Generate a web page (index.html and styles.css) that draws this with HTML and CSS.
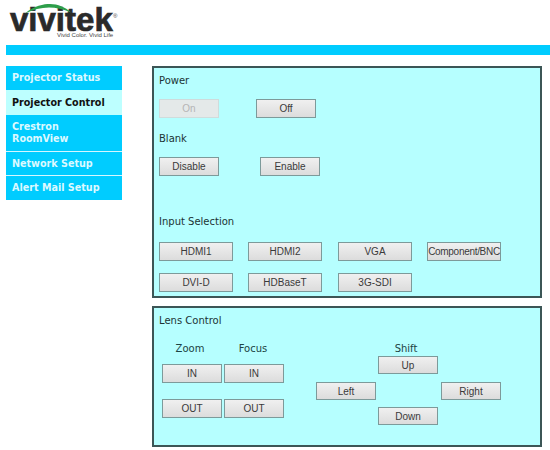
FILE: index.html
```html
<!DOCTYPE html>
<html lang="en">
<head>
<meta charset="utf-8">
<title>Vivitek Projector Control</title>
<link rel="stylesheet" href="styles.css">
</head>
<body>
<header class="header">
  <div class="logo">
    <span class="logo-word">vivitek</span><span class="logo-reg">®</span>
    <svg class="logo-arc" width="46" height="10" viewBox="0 0 46 10"><path d="M0 9.5C9 1.5 19 0 25 0C33 0 40 3 46 8.5C38 5 31 3.4 24 3.4C16 3.4 8 5.5 0 9.5Z" fill="#2e9e4a"/></svg>
    <span class="logo-tag">Vivid Color. Vivid Life</span>
  </div>
</header>
<div class="bar"></div>
<div class="content">
  <nav class="nav">
    <a class="nav-item nav-status">Projector Status</a>
    <a class="nav-item nav-active">Projector Control</a>
    <a class="nav-item nav-tall">Crestron RoomView</a>
    <a class="nav-item nav-net">Network Setup</a>
    <a class="nav-item">Alert Mail Setup</a>
  </nav>
  <main class="main">
    <section class="panel panel-top">
      <div class="label">Power</div>
      <div class="row row-power">
        <button class="btn btn-off" disabled>On</button>
        <button class="btn">Off</button>
      </div>
      <div class="label label-blank">Blank</div>
      <div class="row row-blank">
        <button class="btn">Disable</button>
        <button class="btn">Enable</button>
      </div>
      <div class="label label-input">Input Selection</div>
      <div class="inputs">
        <button class="btn btn-wide">HDMI1</button>
        <button class="btn btn-wide">HDMI2</button>
        <button class="btn btn-wide">VGA</button>
        <button class="btn btn-wide btn-tight">Component/BNC</button>
        <button class="btn btn-wide">DVI-D</button>
        <button class="btn btn-wide">HDBaseT</button>
        <button class="btn btn-wide">3G-SDI</button>
      </div>
    </section>
    <section class="panel panel-lens">
      <div class="label">Lens Control</div>
      <div class="lens">
        <div class="lens-pair">
          <div class="sub sub-zoom">Zoom</div>
          <div class="sub sub-focus">Focus</div>
          <button class="btn btn-in">IN</button>
          <button class="btn btn-in">IN</button>
          <button class="btn btn-out">OUT</button>
          <button class="btn btn-out">OUT</button>
        </div>
        <div class="shift">
          <div class="sub shift-label">Shift</div>
          <button class="btn shift-up">Up</button>
          <button class="btn shift-left">Left</button>
          <button class="btn shift-right">Right</button>
          <button class="btn shift-down">Down</button>
        </div>
      </div>
    </section>
  </main>
</div>
</body>
</html>
```
FILE: styles.css
```css
* { box-sizing: border-box; }
html, body { margin: 0; padding: 0; background: #fff; }
body { width: 550px; height: 450px; overflow: hidden; font-family: "DejaVu Sans", Verdana, sans-serif; }

.header { height: 45px; padding: 4px 0 0 10px; }
.logo { position: relative; width: 110px; height: 36px; }
.logo-word {
  position: absolute; left: 0; top: 4px;
  font: 700 33px/24px "Liberation Sans", Arial, sans-serif;
  color: #2a2a2a;
  -webkit-text-stroke: 0.7px #2a2a2a;
}
.logo-arc { position: absolute; left: 15px; top: 0; }
.logo-reg { position: absolute; left: 103px; top: 9px; font: 6px/6px "Liberation Sans", sans-serif; color: #444; }
.logo-tag { position: absolute; left: 47px; top: 28px; font: 6px/7px "Liberation Sans", sans-serif; color: #444; white-space: nowrap; }

.bar { height: 10px; margin-left: 6px; background: #00ccff; }

.content { display: flex; gap: 30px; margin-top: 11px; padding-left: 6px; }

.nav { width: 116px; display: flex; flex-direction: column; align-self: flex-start; }
.nav-item {
  display: flex; align-items: center; height: 24px; padding: 0 6px;
  background: #00ccff; color: #dcf9ff;
  font: 700 9.6px/12px "DejaVu Sans", Verdana, sans-serif;
}
.nav-active { background: #bdffff; color: #111; height: 25px; }
.nav-tall { height: 37px; border-bottom: 1px solid #d5f6ff; }
.nav-net { border-bottom: 1px solid #d5f6ff; }

.main { width: 390px; display: flex; flex-direction: column; gap: 8px; }
.panel { border: 2px solid #3c5656; background: #b6ffff; padding: 6px 5px 0; }
.panel-top { height: 232px; }
.panel-lens { height: 141px; }

.label { font-size: 10px; line-height: 13px; color: #1c3434; }
.row { display: flex; }
.row-power { gap: 37px; margin-top: 12px; }
.row-blank { gap: 41px; margin-top: 12px; }
.label-blank { margin-top: 14px; }
.label-input { margin-top: 39px; }

.btn {
  width: 60px; height: 19px; padding: 0;
  border: 1px solid #7d9a9a; border-radius: 0;
  background: linear-gradient(#f0f0f0, #dcdcdc);
  font: 10px/15px "Liberation Sans", Arial, sans-serif; color: #3a3a3a;
  white-space: nowrap;
}
.btn-off { color: #b5b5b5; border-color: #cfdcdc; background: #e4e9e9; }
.btn-wide { width: 74px; }
.btn-tight { letter-spacing: -0.3px; }

.inputs { display: grid; grid-template-columns: 89px 90px 89px 74px; row-gap: 12px; margin-top: 14px; }

.lens { display: flex; align-items: flex-start; margin-top: 15px; }
.lens-pair { display: grid; grid-template-columns: 62px 60px; margin-left: 3px; }
.sub { font-size: 10px; line-height: 13px; color: #1c4444; text-align: center; }
.lens-pair .sub { margin-bottom: 9px; }
.sub-zoom { padding-right: 6px; }
.sub-focus { padding-right: 2px; }
.btn-out { margin-top: 16px; }

.shift { display: grid; grid-template-columns: 62px 62px 60px; grid-template-rows: 14px 18px 8px 18px 7px 18px; margin-left: 32px; }
.shift-label { grid-column: 2; grid-row: 1; padding-right: 6px; }
.shift-up { grid-column: 2; grid-row: 2; height: 18px; }
.shift-left { grid-column: 1; grid-row: 4; height: 18px; }
.shift-right { grid-column: 3; grid-row: 4; margin-left: 1px; height: 18px; }
.shift-down { grid-column: 2; grid-row: 6; height: 18px; }
```
